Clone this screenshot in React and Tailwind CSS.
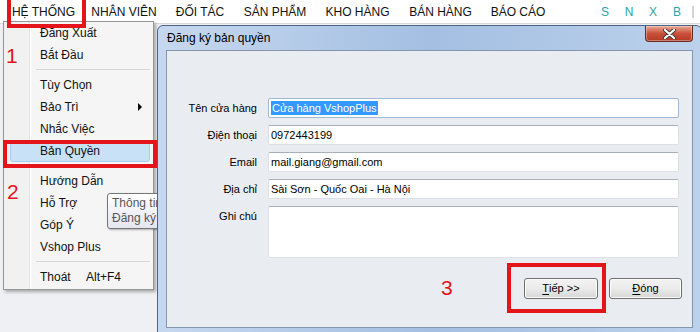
const topMenu = [
  { label: 'HỆ THỐNG', w: 'w-[77px]' },
  { label: 'NHÂN VIÊN', w: 'w-[84px]' },
  { label: 'ĐỐI TÁC', w: 'w-[68px]' },
  { label: 'SẢN PHẨM', w: 'w-[82px]' },
  { label: 'KHO HÀNG', w: 'w-[83px]' },
  { label: 'BÁN HÀNG', w: 'w-[83px]' },
  { label: 'BÁO CÁO', w: 'w-[72px]' },
]

const menuItems = [
  { label: 'Đăng Xuất' },
  { label: 'Bắt Đầu' },
  'sep',
  { label: 'Tùy Chọn' },
  { label: 'Bảo Trì', sub: true },
  { label: 'Nhắc Việc' },
  { label: 'Bản Quyền', active: true },
  'sep',
  { label: 'Hướng Dẫn' },
  { label: 'Hỗ Trợ' },
  { label: 'Góp Ý' },
  { label: 'Vshop Plus' },
  'sep',
  { label: 'Thoát', shortcut: 'Alt+F4' },
]

const fields = [
  { label: 'Tên cửa hàng', value: 'Cửa hàng VshopPlus', selected: true },
  { label: 'Điện thoại', value: '0972443199' },
  { label: 'Email', value: 'mail.giang@gmail.com' },
  { label: 'Địa chỉ', value: 'Sài Sơn - Quốc Oai - Hà Nội' },
]

function DropMenu() {
  return (
    <div className="absolute left-[3px] top-[21px] z-[5] w-[151px] border border-[#979797] bg-[linear-gradient(to_right,#f1f1f1_0,#f1f1f1_25px,#e3e3e3_25px,#e3e3e3_26px,#ffffff_26px,#ffffff_27px,#f5f5f5_27px)] pb-[1px] shadow-[2px_2px_3px_rgba(0,0,0,0.3)]">
      {menuItems.map((item, i) =>
        item === 'sep' ? (
          <div key={i} className="flex h-[8px] items-center pl-[32px] pr-[3px]">
            <div className="h-[2px] flex-1 border-t border-[#d7d7d7] border-b-white" />
          </div>
        ) : (
          <div key={i} className="flex h-[22px] pl-[6px] pr-[3px]">
            <div
              className={`flex flex-1 items-center rounded-[3px] border pl-[29px] pr-[7px] ${
                item.active ? 'border-[#a8cdef] bg-[#c9e1f7]' : 'border-transparent'
              }`}
            >
              <span className={item.shortcut ? 'w-[46px]' : ''}>{item.label}</span>
              {item.shortcut ? <span>{item.shortcut}</span> : null}
              {item.sub ? (
                <span className="ml-auto h-0 w-0 border-y-[4px] border-l-[4px] border-y-transparent border-l-black" />
              ) : null}
            </div>
          </div>
        )
      )}
    </div>
  )
}

function Field({ field }) {
  return (
    <>
      <div className="text-right leading-[20px]">{field.label}</div>
      <div
        className={`flex h-[20px] items-center rounded-[2px] border bg-white pl-[2px] ${
          field.selected ? 'border-[#9fb9d6]' : 'border-[#dde1e7] border-t-[#aab0b8]'
        }`}
      >
        {field.selected ? (
          <span className="bg-[#3399ff] px-[1px] leading-[14px] text-white">{field.value}</span>
        ) : (
          <span>{field.value}</span>
        )}
      </div>
    </>
  )
}

function Button({ first, rest, w }) {
  return (
    <div
      className={`flex h-[21px] ${w} items-center justify-center rounded-[3px] border border-[#707070] bg-linear-to-b from-[#f3f3f3] via-[#ebebeb] to-[#d6d6d6] shadow-[inset_0_0_0_1px_#fcfcfc]`}
    >
      <span className="underline underline-offset-2">{first}</span>
      <span>{rest}</span>
    </div>
  )
}

export default function App() {
  return (
    <div className="relative flex h-[332px] w-[700px] flex-col overflow-hidden bg-[#eef0f3] font-['Liberation_Sans',Arial,sans-serif] text-[12px] text-[#111]">
      {/* menu bar */}
      <div className="flex h-[24px] shrink-0 items-center border-b border-[#dadada] bg-white pl-[5px]">
        {topMenu.map((m) => (
          <div key={m.label} className={`${m.w} text-center`}>
            {m.label}
          </div>
        ))}
        <div className="ml-[39px] flex text-[#2ea3a5]">
          {['S', 'N', 'X', 'B'].map((c) => (
            <span key={c} className="w-[24px] text-center">
              {c}
            </span>
          ))}
        </div>
        <div className="ml-[3px] h-[12px] w-[2px] bg-[#d4d4d4]" />
      </div>

      {/* workspace */}
      <div className="flex flex-1 pt-[1px]">
        <div className="w-[157px] shrink-0" />
        <div className="relative z-20 flex h-[312px] w-[545px] shrink-0 flex-col rounded-t-[6px] border border-[#4d6382] bg-linear-to-r from-[#c6d8ef] via-[#a4bfe2] to-[#bcd1ec] px-[8px] pb-[8px]">
          <div className="flex h-[24px] shrink-0 items-center justify-between">
            <span className="pl-[1px] text-black">Đăng ký bản quyền</span>
            <div className="flex h-[16px] w-[48px] items-center justify-center self-start rounded-b-[4px] border border-t-0 border-[#6b2a22] bg-linear-to-b from-[#e7a796] via-[#c9503a] to-[#b43a23] shadow-[inset_0_0_0_1px_rgba(255,255,255,0.35)]">
              <svg width="13" height="10" viewBox="0 0 13 10">
                <path d="M2 1 L11 9 M11 1 L2 9" stroke="#3b3b3b" strokeWidth="4" strokeLinecap="round" />
                <path d="M2 1 L11 9 M11 1 L2 9" stroke="#ffffff" strokeWidth="2.2" strokeLinecap="round" />
              </svg>
            </div>
          </div>

          <div className="flex flex-1 flex-col border border-[#8396ae] bg-[#e9edf2] pt-[47px] text-[11px] text-black">
            <div className="grid grid-cols-[90px_1fr] gap-x-[11px] gap-y-[7px] pr-[13px]">
              {fields.map((f) => (
                <Field key={f.label} field={f} />
              ))}
              <div className="text-right leading-[20px]">Ghi chú</div>
              <div className="h-[52px] rounded-[2px] border border-[#dde1e7] border-t-[#aab0b8] bg-white" />
            </div>
            <div className="mt-[20px] flex justify-end gap-[11px] pr-[10px]">
              <Button first="T" rest="iếp >>" w="w-[74px]" />
              <Button first="Đ" rest="óng" w="w-[73px]" />
            </div>
          </div>
        </div>
      </div>

      <DropMenu />

      {/* tooltip behind dialog */}
      <div className="absolute left-[107px] top-[193px] z-10 h-[36px] w-[70px] whitespace-nowrap rounded-[3px] border border-[#767676] bg-linear-to-b from-white to-[#e4e5f0] px-[4px] pt-[2px] leading-[15px] text-[#575757] shadow-[1px_1px_2px_rgba(0,0,0,0.3)]">
        <div>Thông tin</div>
        <div>Đăng ký</div>
      </div>

      {/* annotations */}
      <div className="absolute left-[7px] top-[-4px] z-30 h-[32px] w-[79px] border-[4px] border-[#e3151b]" />
      <div className="absolute left-[3px] top-[140px] z-30 h-[28px] w-[154px] border-[4px] border-[#e3151b]" />
      <div className="absolute left-[507px] top-[263px] z-30 h-[50px] w-[99px] border-[4px] border-[#e3151b]" />
      <div className="absolute left-[6px] top-[45px] z-30 text-[21px] leading-none text-[#e3151b]">1</div>
      <div className="absolute left-[7px] top-[181px] z-30 text-[21px] leading-none text-[#e3151b]">2</div>
      <div className="absolute left-[441px] top-[277px] z-30 text-[21px] leading-none text-[#e3151b]">3</div>
    </div>
  )
}
